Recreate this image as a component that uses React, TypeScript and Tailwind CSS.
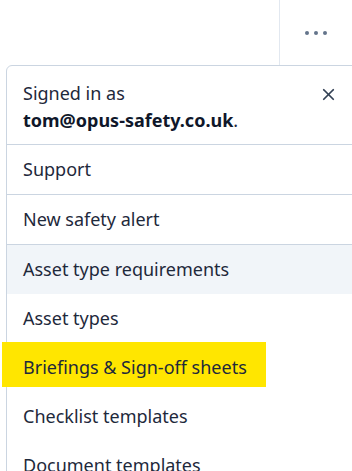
import { X } from 'lucide-react'

const items = ['Asset type requirements', 'Asset types', 'Briefings & Sign-off sheets', 'Checklist templates', 'Document templates']

export default function App() {
  return (
    <div className="w-[352px] h-[471px] overflow-hidden bg-white text-[#1e293b] font-['Noto_Sans',sans-serif] text-[18px] leading-[27px]">
      <div className="flex h-[65px]">
        <div className="flex-1" />
        <div className="w-[73px] border-l border-[#e2e8f0] flex items-center justify-center gap-[5px]">
          <span className="w-1 h-1 rounded-full bg-[#64748b]" />
          <span className="w-1 h-1 rounded-full bg-[#64748b]" />
          <span className="w-1 h-1 rounded-full bg-[#64748b]" />
        </div>
      </div>
      <div className="ml-[6px] w-[380px] border border-[#cbd5e1] rounded-md">
        <div className="flex pl-4 pr-[47px] pt-[14px] pb-[10px]">
          <div className="flex-1">
            <div>Signed in as</div>
            <div>
              <span className="font-bold text-[#0f172a]">tom@opus-safety.co.uk</span>.
            </div>
          </div>
          <button className="mt-[5px] h-4 text-[#334155]">
            <X size={19} strokeWidth={2.2} />
          </button>
        </div>
        <div className="border-t border-[#cbd5e1] px-4 py-[11px]">Support</div>
        <div className="border-t border-[#cbd5e1] px-4 py-[11px]">New safety alert</div>
        <div className="border-t border-[#cbd5e1]">
          {items.map((item, i) => (
            <div
              key={item}
              className={'relative px-4 py-[11px] ' + (i === 0 ? 'bg-[#f1f5f9]' : '')}
            >
              {item.startsWith('Briefings') && (
                <span className="absolute left-[-5px] top-[-1px] w-[264px] h-[45px] bg-[#ffe600]" />
              )}
              <span className="relative">{item}</span>
            </div>
          ))}
        </div>
      </div>
    </div>
  )
}
